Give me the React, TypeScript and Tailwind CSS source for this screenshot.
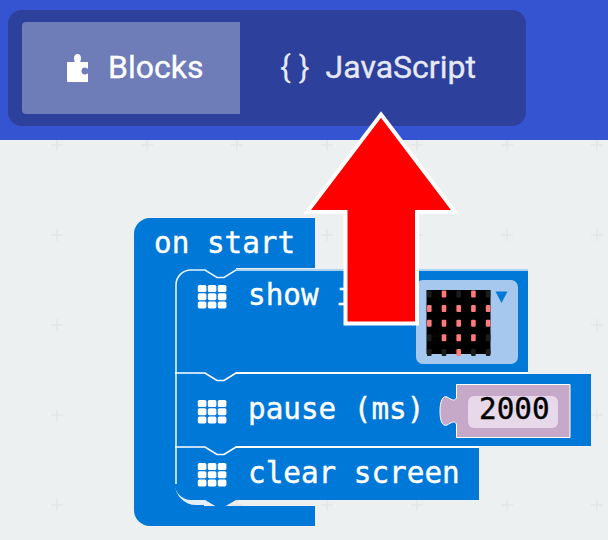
const gridX = [57, 147, 237, 327, 417, 507, 597];
const gridY = [145, 235, 325, 415, 505];

const LEDS = [
  [0, 1, 0, 1, 0],
  [1, 1, 1, 1, 1],
  [1, 1, 1, 1, 1],
  [0, 1, 1, 1, 0],
  [0, 0, 1, 0, 0],
];

function GridIcon({ y }: { y: number }) {
  // 3x3 led icon in front of each block label
  const cells = [];
  for (let r = 0; r < 3; r++) {
    for (let c = 0; c < 3; c++) {
      cells.push(<rect key={`${r}-${c}`} x={197.8 + c * 10} y={y + r * 8.2} width={8.6} height={7} rx={1.6} fill="#fff" />);
    }
  }
  return <g>{cells}</g>;
}

function Workspace() {
  return (
    <svg className="absolute inset-0" width="608" height="400" viewBox="0 140 608 400">
      {gridX.map((x) =>
        gridY.map((y) => (
          <path key={`${x}-${y}`} d={`M${x - 6} ${y}H${x + 6}M${x} ${y - 6}V${y + 6}`} stroke="#dde1e3" strokeWidth="1" fill="none" />
        )),
      )}
      {/* on start */}
      <path d="M134 234a16 16 0 0 1 16-16H315V268H190V506H315V526H150a16 16 0 0 1-16-16Z" fill="#0078d7" />
      <rect x="174" y="268" width="30" height="238" fill="#0078d7" />
      {/* stacked blocks */}
      <path d="M175 285a16 16 0 0 1 16-16H528V372H175Z" fill="#0078d7" />
      <rect x="175" y="374" width="416" height="72" fill="#0078d7" />
      <path d="M175 448H479V500H191a16 16 0 0 1-16-16Z" fill="#0078d7" />
      <path d="M205 500H236L224 507H217Z" fill="#0078d7" />
      {/* notches stay blue above the connector line */}
      <rect x="204" y="267" width="32" height="4" fill="#0078d7" />
      <rect x="204" y="371" width="32" height="4" fill="#0078d7" />
      <rect x="204" y="445" width="32" height="4" fill="#0078d7" />
      {/* highlights */}
      <path d="M176 484V285a15 15 0 0 1 15-15H205L217 277.5H224L236 270H528" stroke="#fff" strokeWidth="1.6" fill="none" opacity="0.9" />
      <path d="M175 373H205L217 380.5H224L236 373H528" stroke="#fff" strokeWidth="1.6" fill="none" />
      <path d="M175 447H205L217 454.5H224L236 447H479" stroke="#fff" strokeWidth="1.6" fill="none" />
      <path d="M175 484a21 21 0 0 0 21 21H209L205 500H191a16 16 0 0 1-16-16Z" fill="#e4eef6" />
      <GridIcon y={285} />
      <GridIcon y={400} />
      <GridIcon y={463} />
      {/* image field */}
      <rect x="416" y="280" width="102" height="84" rx="7" fill="#a6c8ef" />
      <rect x="426.5" y="290" width="64" height="64" fill="#000" />
      {LEDS.map((row, r) =>
        row.map((on, c) => (
          <rect key={`${r}-${c}`} x={427 + c * 14.7} y={290.5 + r * 14.6} width={4.6} height={7} rx={1} fill={on ? "#ff7a7a" : "#1c1c1c"} />
        )),
      )}
      <path d="M495.5 291.5H507.5L501.5 303Z" fill="#0078d7" />
      {/* number shadow block */}
      <path d="M456.5 384.5H570V437.5H456.5V424C454 420 451 423 447 425C442 427 440 420 440 411C440 401 443 395 447 397C451 399 454 402 456.5 398Z" fill="#c6a9c8" stroke="#fff" strokeWidth="1" />
      <rect x="468" y="396" width="90" height="32" rx="6" fill="#e7d9e9" />
    </svg>
  );
}

function Arrow() {
  return (
    <svg className="absolute inset-0 pointer-events-none" width="608" height="540" viewBox="0 0 608 540">
      <path d="M381 114.5L455 212H417V323.5H345.5V212H307Z" fill="#ff0000" stroke="#fff" strokeWidth="4" strokeLinejoin="miter" />
    </svg>
  );
}

export default function App() {
  const mono = "font-['DejaVu_Sans_Mono',monospace] text-[29.3px] leading-none text-white whitespace-pre absolute [-webkit-text-stroke:0.4px_#fff]";
  return (
    <div className="relative w-[608px] h-[540px] overflow-hidden flex flex-col bg-[#ecf0f1] font-['Roboto',sans-serif]">
      {/* Toolbar */}
      <div className="h-[140px] shrink-0 bg-[#3454d1] pt-[10px] pl-2">
        <div className="w-[518px] h-[116px] rounded-[14px] bg-[#2d409b] p-[12px_14px] flex">
          <div className="w-[218px] h-[92px] rounded-l-[4px] bg-[#6e7db8] flex items-center pl-[45px] gap-[20px] text-white">
            <svg width="21" height="28" viewBox="0 0 21 28" fill="#fff">
              <path d="M1 8H7C8.5 8 7 6.5 7 4.2C7 1.5 8.5 0 10.5 0C12.5 0 14 1.5 14 4.2C14 6.5 12.5 8 14 8H21V14C21 15.5 19.5 13.5 17.5 13.5C15.8 13.5 14.5 15 14.5 17C14.5 19 15.8 20.5 17.5 20.5C19.5 20.5 21 18.5 21 20V28H1C0.4 28 0 27.6 0 27V9C0 8.4 0.4 8 1 8Z" />
            </svg>
            <span className="text-[32px] leading-none pb-[2px] [-webkit-text-stroke:0.35px_#fff]">Blocks</span>
          </div>
          <div className="flex-1 flex items-center pl-[40px] gap-[16px] text-[#e6e9f5]">
            <span className="text-[32px] leading-none pb-[2px]">{"{ }"}</span>
            <span className="text-[32px] leading-none pb-[2px] [-webkit-text-stroke:0.35px_#e6e9f5]">JavaScript</span>
          </div>
        </div>
      </div>

      {/* Blocks workspace */}
      <div className="relative flex-1">
        <Workspace />
        <span className={`${mono} left-[154px] top-[89px]`}>on start</span>
        <span className={`${mono} left-[248px] top-[141px]`}>show icon</span>
        <span className={`${mono} left-[248px] top-[255px]`}>pause (ms)</span>
        <span className={`${mono} left-[248px] top-[319px]`}>clear screen</span>
        <span className="absolute left-[479px] top-[255px] font-['DejaVu_Sans_Mono',monospace] text-[29.3px] leading-none text-black [-webkit-text-stroke:0.4px_#000]">2000</span>
      </div>
      <Arrow />
    </div>
  );
}
